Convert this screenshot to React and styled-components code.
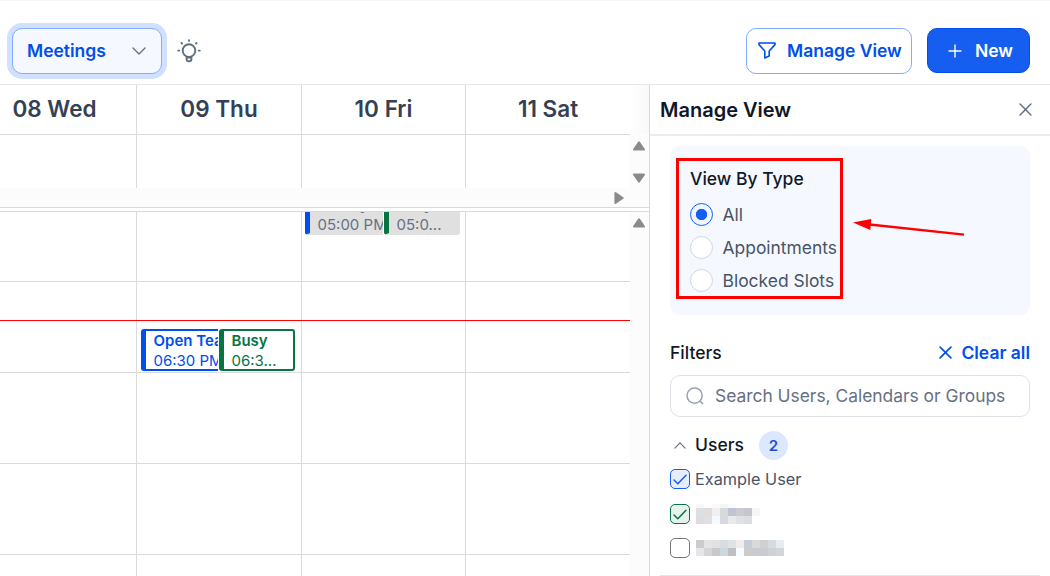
import React from 'react'
import styled, { createGlobalStyle } from 'styled-components'

const days = [
  { label: '08 Wed', width: 137, shift: 27 },
  { label: '09 Thu', width: 165 },
  { label: '10 Fri', width: 164 },
  { label: '11 Sat', width: 164 },
]

const hours = [70, 91, 91, 91, 21]

const events = [
  { title: 'Survey', time: '05:00 PM', x: 305, y: -19, width: 78, past: true, open: true, color: '#004eeb' },
  { title: 'Busy', time: '05:0...', x: 384, y: -19, width: 76, past: true, color: '#087443' },
  { title: 'Open Team', time: '06:30 PM', x: 141, y: 117, width: 77, open: true, color: '#004eeb' },
  { title: 'Busy', time: '06:3...', x: 219, y: 117, width: 76, color: '#087443' },
]

const types = ['All', 'Appointments', 'Blocked Slots']

const maskedNames = [
  [
    [4, '#f7f7f8 #ffffff #fcfaf9 #f5f5f6 #f9fafb #ffffff #ffffff #ffffff'],
    [8, '#dcdfe3 #e2dcda #eff0ef #d8d9dd #bec5d0 #c9cbd1 #c3c6cb #f5f6f8'],
    [8, '#dcdde1 #e1e0e1 #f6faff #d8d9de #e8e9eb #e0e1e5 #dcdde1 #ffffff'],
  ],
  [
    [8, '#c9cbcf #e3e4e6 #e0e1e4 #d7dde2 #e1e2e4 #f2ecea #c7cdd6 #dad9d8 #cfd0d5 #d5dbe1 #e8ecef'],
    [8, '#e5e6e8 #d5d5d5 #c9c9cb #cdd7e0 #c0c0c3 #f6fcff #cdcccd #c8cacf #cacbd0 #cfd1d5 #d1d6da'],
  ],
]

const Triangle = ({ turn = 0 }) => (
  <svg width="14" height="12" viewBox="-7 -6 14 12">
    <path
      d="M0 -3.7 L5 3.6 H-5 Z"
      fill="#8b8b8b"
      stroke="#8b8b8b"
      strokeWidth="2"
      strokeLinejoin="round"
      transform={`rotate(${turn})`}
    />
  </svg>
)

const Cross = ({ size, width = 1.5 }) => (
  <svg width={size} height={size} viewBox="0 0 12 12" fill="none" stroke="currentColor" strokeWidth={width} strokeLinecap="round">
    <path d="M1 1 L11 11 M11 1 L1 11" />
  </svg>
)

const Chevron = ({ up, width = 14 }) => (
  <svg width={width} height={width / 2 + 1} viewBox="0 0 14 8" fill="none" stroke="#667085" strokeWidth="1.4" strokeLinecap="round" strokeLinejoin="round">
    <path d={up ? 'M1 7 L7 1 L13 7' : 'M1 1 L7 7 L13 1'} />
  </svg>
)

const Bulb = () => (
  <svg width="24" height="24" viewBox="0 0 24 24" fill="none" stroke="#5f6f7a" strokeWidth="1.9" strokeLinecap="round">
    <circle cx="12" cy="11.6" r="6.3" />
    <path d="M9.6 17.8 V20.3 Q9.6 22.4 12 22.4 Q14.4 22.4 14.4 20.3 V17.8 M9.8 18.6 H14.2" />
    <path d="M12 1.2 V1.9 M4.5 4 L5 4.5 M19.5 4 L19 4.5 M1.2 11.6 H2.2 M21.8 11.6 H22.8" />
  </svg>
)

const Funnel = () => (
  <svg width="18" height="17" viewBox="0 0 18 17" fill="none" stroke="currentColor" strokeWidth="1.6" strokeLinejoin="round">
    <path d="M1 1 H17 V2.6 L11.2 9 V14 L6.8 16 V9 L1 2.6 Z" />
  </svg>
)

const Plus = () => (
  <svg width="14" height="14" viewBox="0 0 14 14" stroke="currentColor" strokeWidth="1.4" strokeLinecap="round">
    <path d="M7 1 V13 M1 7 H13" />
  </svg>
)

const Magnifier = () => (
  <svg width="18" height="18" viewBox="0 0 18 18" fill="none" stroke="#98a2b3" strokeWidth="1.5" strokeLinecap="round">
    <circle cx="8.6" cy="8.6" r="7.6" />
    <path d="M14.2 14.2 L16.6 16.6" />
  </svg>
)

const Tick = () => (
  <svg width="14" height="11" viewBox="0 0 14 11" fill="none" stroke="currentColor" strokeWidth="1.5" strokeLinecap="round" strokeLinejoin="round">
    <path d="M1 6 L4.8 9.8 L13 1.2" />
  </svg>
)

const MaskedName = ({ rows }) => (
  <Mask>
    {rows.map(([height, cells], i) => (
      <MaskRow key={i} $height={height}>
        {cells.split(' ').map((color, j) => (
          <MaskCell key={j} $color={color} />
        ))}
      </MaskRow>
    ))}
  </Mask>
)

const App = () => (
  <Page>
    <GlobalStyle />
    <Toolbar>
      <Select>
        Meetings
        <Chevron />
      </Select>
      <Bulb />
      <Spacer />
      <OutlineButton>
        <Funnel />
        Manage View
      </OutlineButton>
      <PrimaryButton>
        <Plus />
        New
      </PrimaryButton>
    </Toolbar>
    <Main>
      <Calendar>
        <DayHeader>
          {days.map(day => (
            <Day key={day.label} $width={day.width} $shift={day.shift}>
              {day.label}
            </Day>
          ))}
          <HeaderEdge />
        </DayHeader>
        <AllDay>
          <Columns>
            {days.map(day => (
              <Column key={day.label} $width={day.width} />
            ))}
          </Columns>
          <Track>
            <Triangle />
            <Triangle turn={180} />
          </Track>
        </AllDay>
        <HorizontalTrack>
          <Triangle turn={90} />
        </HorizontalTrack>
        <Divider />
        <TimeGrid>
          <Columns>
            {days.map(day => (
              <Column key={day.label} $width={day.width}>
                {hours.map((height, i) => (
                  <Hour key={i} $height={height} />
                ))}
              </Column>
            ))}
          </Columns>
          <Track>
            <Triangle />
          </Track>
          <NowLine />
          {events.map((event, i) => (
            <Event
              key={i}
              $x={event.x}
              $y={event.y}
              $width={event.width}
              $color={event.color}
              $past={event.past}
              $open={event.open}
            >
              <EventTitle>{event.title}</EventTitle>
              <EventTime>{event.time}</EventTime>
            </Event>
          ))}
        </TimeGrid>
      </Calendar>
      <Panel>
        <PanelHeader>
          <PanelTitle>Manage View</PanelTitle>
          <Cross size={13} width={1.4} />
        </PanelHeader>
        <PanelBody>
          <TypeCard>
            <Heading>View By Type</Heading>
            {types.map((type, i) => (
              <Option key={type}>
                <Radio $checked={i === 0} />
                {type}
              </Option>
            ))}
            <Highlight />
            <Arrow width="116" height="24" viewBox="0 0 116 24">
              <path d="M15 9 L114 19.6" stroke="#ff0000" strokeWidth="2.4" />
              <path d="M3 7.4 L21.3 4 L20.3 15 Z" fill="#ff0000" />
            </Arrow>
          </TypeCard>
          <FiltersHeader>
            <Heading>Filters</Heading>
            <ClearAll>
              <Cross size={13} width={1.5} />
              Clear all
            </ClearAll>
          </FiltersHeader>
          <Search>
            <Magnifier />
            <Placeholder>Search Users, Calendars or Groups</Placeholder>
          </Search>
          <Group>
            <Chevron up width={12} />
            <Heading>Users</Heading>
            <Count>2</Count>
          </Group>
          <User $height={34}>
            <Checkbox $color="#155eef" $fill="#e5edff">
              <Tick />
            </Checkbox>
            Example User
          </User>
          <User $height={36}>
            <Checkbox $color="#087443" $fill="#e6f2ec">
              <Tick />
            </Checkbox>
            <MaskedName rows={maskedNames[0]} />
          </User>
          <User $height={32}>
            <Checkbox $color="#767676" $fill="#ffffff" />
            <MaskedName rows={maskedNames[1]} />
          </User>
          <Rule />
        </PanelBody>
      </Panel>
    </Main>
  </Page>
)

export default App

const GlobalStyle = createGlobalStyle`
  * {
    box-sizing: border-box;
  }

  body {
    margin: 0;
    overflow: hidden;
    background: #fff;
    font-family: Inter, 'Liberation Sans', sans-serif;
  }

  svg {
    display: block;
    flex: none;
  }
`

const Page = styled.div`
  display: flex;
  flex-direction: column;
  width: 1050px;
  height: 576px;
  overflow: hidden;
`

const Toolbar = styled.div`
  display: flex;
  align-items: center;
  height: 85px;
  padding: 17px 20px 0 12px;
  border-top: 1px solid #f5f5f6;
  border-bottom: 1px solid #e4e7ec;
`

const Spacer = styled.div`
  flex: 1;
`

const Button = styled.div`
  display: flex;
  align-items: center;
  height: 46px;
  padding-bottom: 1px;
  border: 1px solid #84adff;
  border-radius: 10px;
  color: #004eeb;
  font-size: 17.5px;
  font-weight: 600;
  white-space: nowrap;
`

const Select = styled(Button)`
  justify-content: space-between;
  width: 150px;
  margin-right: 15px;
  padding: 0 15px 1px 14px;
  background: #f5f8ff;
  box-shadow: 0 0 0 5px #d1e0ff;
`

const OutlineButton = styled(Button)`
  width: 166px;
  padding-left: 11px;
  gap: 11px;
`

const PrimaryButton = styled(Button)`
  width: 103px;
  height: 45px;
  margin: 0 0 1px 15px;
  padding: 0 0 0 20px;
  gap: 13px;
  border-color: #004eeb;
  background: #155eef;
  color: #fff;
`

const Main = styled.div`
  display: flex;
  flex: 1;
  min-height: 0;
`

const Calendar = styled.div`
  display: flex;
  flex-direction: column;
  width: 649px;
`

const DayHeader = styled.div`
  display: flex;
  height: 50px;
`

const Day = styled.div`
  display: flex;
  align-items: center;
  justify-content: center;
  width: ${({ $width }) => $width}px;
  padding-right: ${({ $shift }) => $shift || 0}px;
  padding-bottom: 2px;
  border-right: 1px solid #dadada;
  border-bottom: 1px solid #dadada;
  color: #344054;
  font-size: 22.5px;
  font-weight: 600;

  &:nth-child(4) {
    border-right: 0;
  }
`

const HeaderEdge = styled.div`
  flex: 1;
  background: linear-gradient(to right, #ffffff, #f8f8f8);
`

const AllDay = styled.div`
  display: flex;
  height: 53px;
`

const Columns = styled.div`
  display: flex;
`

const Column = styled.div`
  width: ${({ $width }) => $width}px;
  border-right: 1px solid #dadada;

  &:last-child {
    border-right: 0;
  }
`

const Track = styled.div`
  display: flex;
  flex: 1;
  flex-direction: column;
  align-items: center;
  justify-content: space-between;
  padding: 5px 1px 4px 0;
  background: #fcfcfc;
`

const HorizontalTrack = styled.div`
  display: flex;
  align-items: center;
  justify-content: flex-end;
  height: 19px;
  padding-right: 23px;
  background: #fcfcfc;
`

const Divider = styled.div`
  height: 5px;
  border: 1px solid #dadada;
  border-width: 1px 0;
`

const TimeGrid = styled.div`
  position: relative;
  display: flex;
  flex: 1;
  overflow: hidden;
`

const Hour = styled.div`
  height: ${({ $height }) => $height}px;
  border-bottom: 1px solid #dadada;

  &:last-child {
    border-bottom: 0;
  }
`

const NowLine = styled.div`
  position: absolute;
  top: 108px;
  left: 0;
  width: 630px;
  height: 1px;
  background: #ff0000;
`

const Event = styled.div`
  position: absolute;
  top: ${({ $y }) => $y}px;
  left: ${({ $x }) => $x}px;
  width: ${({ $width }) => $width}px;
  height: 42px;
  padding-left: 7.5px;
  overflow: hidden;
  border: 2px solid ${({ $color, $past }) => ($past ? '#e0e0e0' : $color)};
  border-left: 5px solid ${({ $color }) => $color};
  border-right-width: ${({ $open }) => ($open ? 0 : 2)}px;
  border-radius: ${({ $open }) => ($open ? '3px 0 0 3px' : '3px')};
  box-shadow: 0 0 0 1px #fff;
  background: ${({ $past }) => ($past ? '#e0e0e0' : '#fff')};
  color: ${({ $color, $past }) => ($past ? '#667085' : $color)};
  font-size: 15px;
  line-height: 20px;
  white-space: nowrap;
`

const EventTitle = styled.div`
  font-weight: 600;
`

const EventTime = styled.div`
  font-weight: 400;
`

const Panel = styled.div`
  width: 401px;
  border-left: 1px solid #dadada;
`

const PanelHeader = styled.div`
  display: flex;
  align-items: center;
  justify-content: space-between;
  height: 51px;
  padding: 0 18.5px 0 10px;
  border-bottom: 2px solid #eaecf0;
  color: #667085;
`

const PanelTitle = styled.div`
  color: #101828;
  font-size: 20px;
  font-weight: 600;
`

const PanelBody = styled.div`
  padding: 10px 20px 0;
`

const TypeCard = styled.div`
  position: relative;
  height: 169px;
  padding: 21px 20px 0;
  border-radius: 10px;
  background: #f5f8ff;
`

const Heading = styled.div`
  color: #101828;
  font-size: 17.5px;
  font-weight: 500;
  line-height: 24px;
`

const Option = styled.div`
  display: flex;
  align-items: center;
  gap: 9.5px;
  height: 33px;
  color: #475467;
  font-size: 17.45px;

  ${Heading} + & {
    margin-top: 7px;
  }
`

const Radio = styled.div`
  width: 23px;
  height: 23px;
  border: 1px solid ${({ $checked }) => ($checked ? '#155eef' : '#d0d5dd')};
  border-radius: 50%;
  background: ${({ $checked }) => ($checked ? 'radial-gradient(circle, #155eef 5.3px, #eff4ff 6px)' : '#fff')};
`

const Highlight = styled.div`
  position: absolute;
  top: 12px;
  left: 6px;
  width: 167px;
  height: 141px;
  border: 3px solid #ff0000;
`

const Arrow = styled.svg`
  position: absolute;
  top: 69px;
  left: 180px;
`

const FiltersHeader = styled.div`
  display: flex;
  align-items: center;
  justify-content: space-between;
  height: 60px;
  padding-top: 16px;
`

const ClearAll = styled.div`
  display: flex;
  align-items: center;
  gap: 9px;
  margin-bottom: 2px;
  color: #004eeb;
  font-size: 17.5px;
  font-weight: 600;
`

const Search = styled.div`
  display: flex;
  align-items: center;
  gap: 11px;
  height: 42px;
  padding-left: 15px;
  border: 1px solid #dfe1e7;
  border-radius: 10px;
`

const Placeholder = styled.div`
  margin-bottom: 2px;
  color: #667085;
  font-size: 17.4px;
  white-space: nowrap;
`

const Group = styled.div`
  display: flex;
  align-items: center;
  height: 29px;
  margin: 14px 0 2px;
  padding-left: 4px;

  ${Heading} {
    margin: 0 15px 2px 9px;
  }
`

const Count = styled.div`
  width: 29px;
  height: 29px;
  border-radius: 50%;
  background: #dbe8ff;
  color: #1d4ed8;
  font-size: 15px;
  font-weight: 600;
  line-height: 29px;
  text-align: center;
`

const User = styled.div`
  display: flex;
  align-items: center;
  gap: 5px;
  height: ${({ $height }) => $height}px;
  color: #475467;
  font-size: 16.3px;
`

const Checkbox = styled.div`
  display: flex;
  align-items: center;
  justify-content: center;
  width: 20px;
  height: 20px;
  border: 1px solid ${({ $color }) => $color};
  border-radius: 5px;
  background: ${({ $fill }) => $fill};
  color: ${({ $color }) => $color};
`

const Mask = styled.div`
  margin-left: 1px;
`

const MaskRow = styled.div`
  display: flex;
  height: ${({ $height }) => $height}px;
`

const MaskCell = styled.div`
  width: 8px;
  background: ${({ $color }) => $color};
`

const Rule = styled.div`
  height: 1px;
  margin: 11px -10px 0;
  background: #e4e7ec;
`
